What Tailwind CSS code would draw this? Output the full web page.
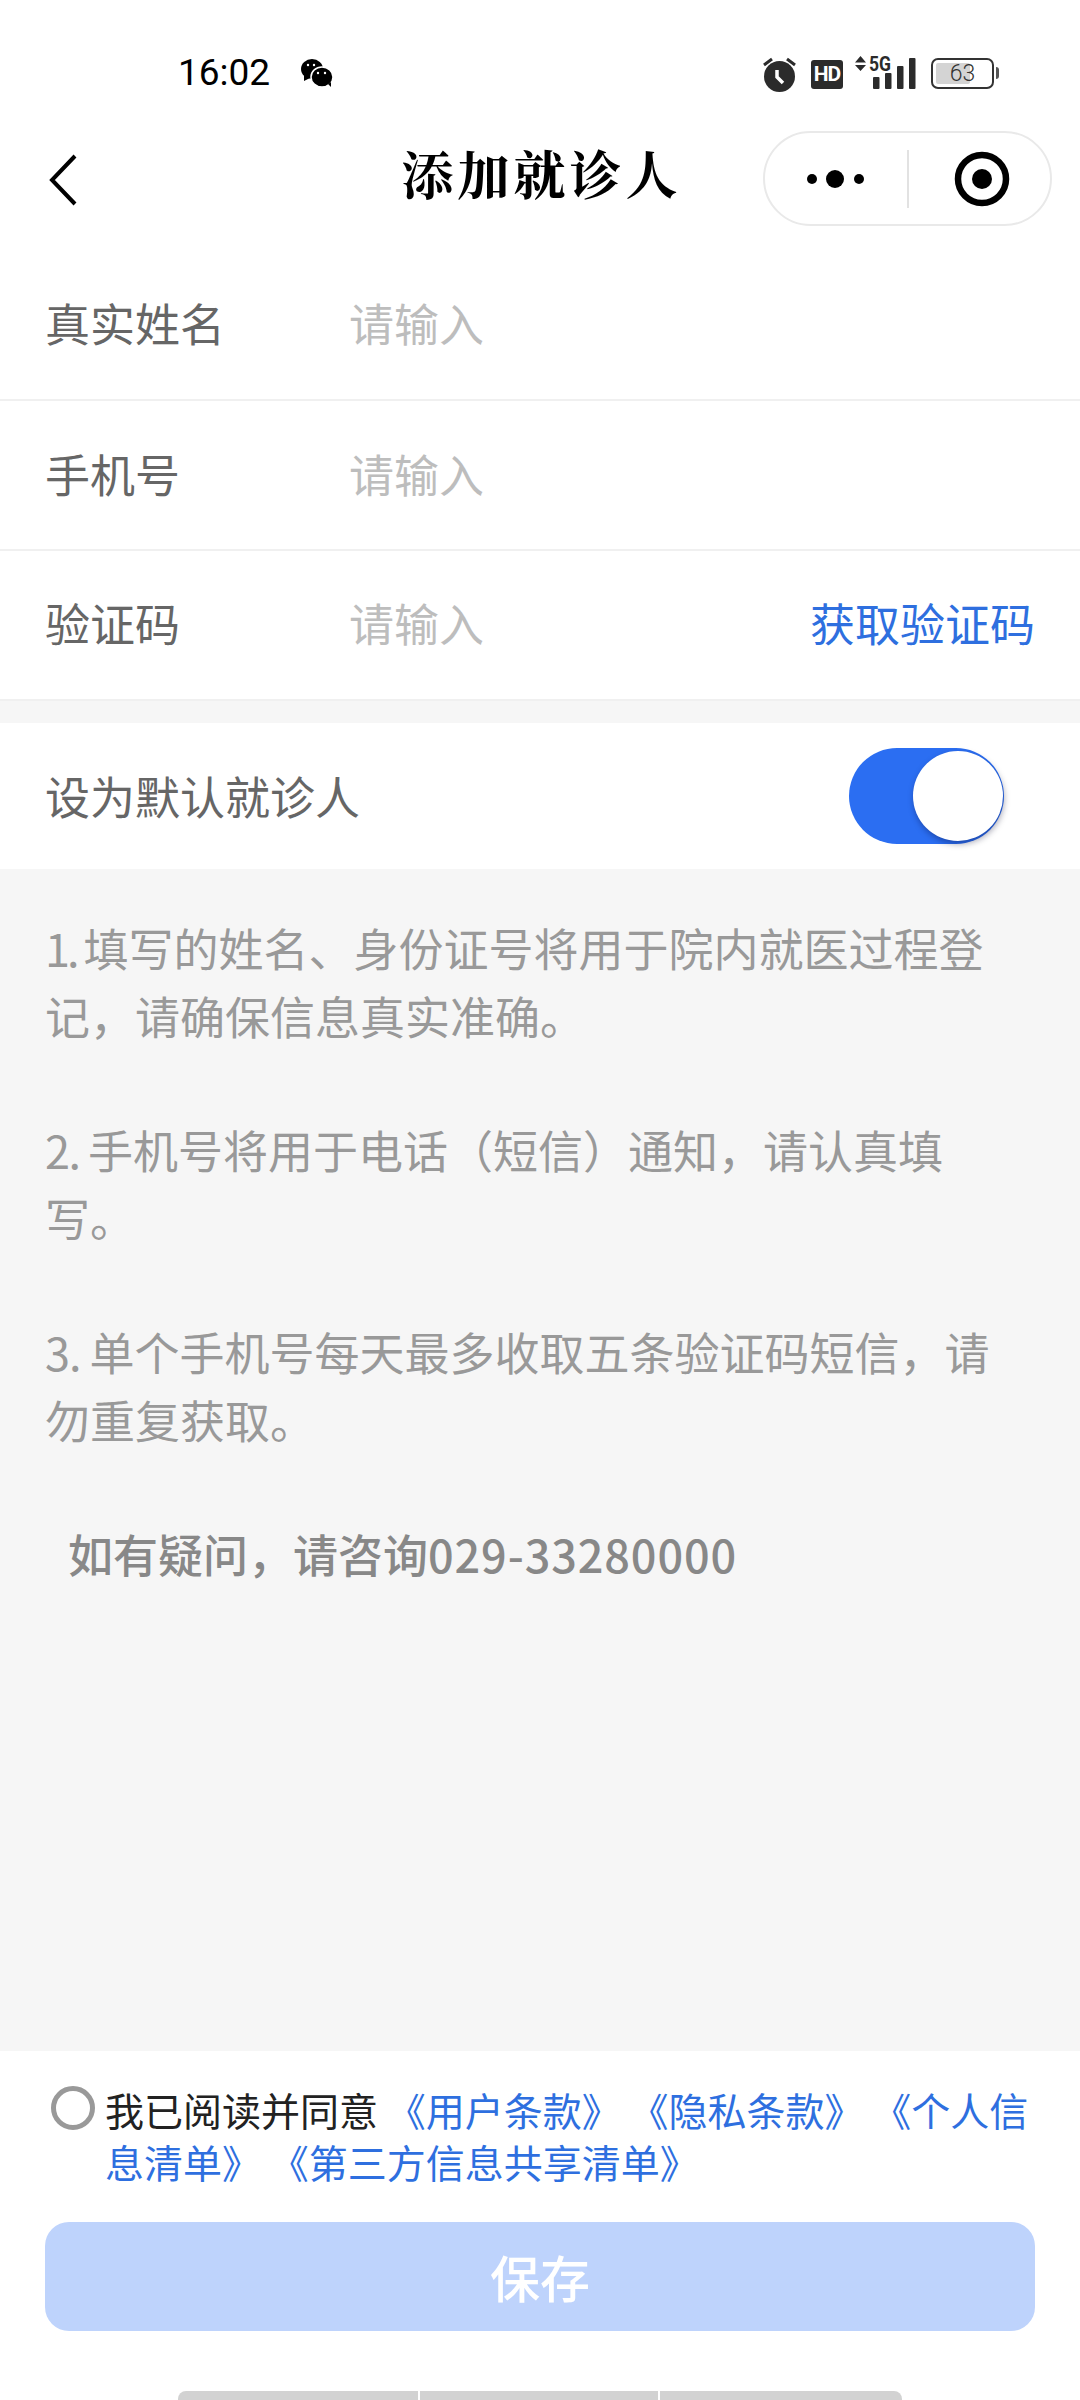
<!DOCTYPE html>
<html lang="zh-CN">
<head>
<meta charset="UTF-8" />
<title>添加就诊人</title>
<script src="https://cdn.jsdelivr.net/npm/@tailwindcss/browser@4"></script>
</head>
<body class="w-[1080px] h-[2400px] bg-[#f6f6f6] font-['Noto_Sans_CJK_SC','Noto_Sans',sans-serif] overflow-hidden flex flex-col">

  <!-- status bar + nav -->
  <div class="bg-white h-[254px] shrink-0 flex flex-col">
    <div class="h-[122px] pt-[47px] pl-[178px] pr-[81px] flex items-start">
      <span class="mt-[6px] font-['Roboto'] text-[37px] leading-[40px] text-black">16:02</span>
      <svg class="ml-[30px] mt-[11px]" width="34" height="30" viewBox="0 0 34 30"><ellipse cx="12" cy="11" rx="11" ry="10" fill="#000"/><path d="M4 17l0 6 6-3z" fill="#000"/><ellipse cx="22" cy="19" rx="11" ry="10" fill="#000" stroke="#fff" stroke-width="1.5"/><path d="M28 26l3 3 0-5z" fill="#000"/><circle cx="8" cy="7" r="1.2" fill="#fff"/><circle cx="14" cy="7" r="1.2" fill="#fff"/><circle cx="18" cy="15" r="1.2" fill="#fff"/><circle cx="25" cy="15" r="1.2" fill="#fff"/></svg>
      <div class="ml-auto flex items-start">
        <svg class="mt-[10px]" width="33" height="35" viewBox="0 0 33 35"><circle cx="16.5" cy="19.5" r="15.5" fill="#2b2b2b"/><path d="M1 8l8-6M32 8l-8-6" stroke="#2b2b2b" stroke-width="3"/><path d="M14 13v7l6 6" stroke="#fff" stroke-width="3.5" fill="none"/></svg>
        <div class="ml-[15px] mt-[13px] w-[32px] h-[29px] rounded-[3px] bg-[#2b2b2b] text-white font-['Roboto'] font-bold text-[21px] leading-[29px] text-center tracking-[-1px]">HD</div>
        <svg class="ml-[12px] mt-[9px]" width="61" height="33" viewBox="0 0 61 33"><path d="M0 6.5l5.5-6.5 5.5 6.5zM0 9h11l-5.5 6z" fill="#2b2b2b"/><rect x="18" y="21" width="6.5" height="12" rx="1" fill="#2b2b2b"/><rect x="30" y="17" width="6.5" height="16" rx="1" fill="#2b2b2b"/><rect x="42" y="10" width="6.5" height="23" rx="1" fill="#2b2b2b"/><rect x="54" y="2" width="6.5" height="31" rx="1" fill="#2b2b2b"/><text x="14" y="15" font-family="Roboto" font-weight="700" font-size="20" textLength="22" lengthAdjust="spacingAndGlyphs" fill="#2b2b2b">5G</text></svg>
        <div class="ml-[15px] mt-[11px] relative w-[63px] h-[31px] rounded-[7px] border-2 border-[#333] bg-white">
          <div class="absolute left-[3px] top-[3px] bottom-[3px] w-[34px] rounded-[2px] bg-[#d4d4d4]"></div>
          <div class="absolute left-0 right-0 top-0 text-center font-['Roboto'] font-light text-[23px] leading-[27px] text-[#333]">63</div>
        </div>
        <div class="ml-[2px] mt-[20px] w-[3px] h-[12px] bg-[#555] rounded-r"></div>
      </div>
    </div>
    <div class="relative h-[132px] flex items-start">
      <svg class="ml-[49px] mt-[32px]" width="28" height="52" viewBox="0 0 28 52"><path d="M26 2L3 26l23 24" fill="none" stroke="#000" stroke-width="4"/></svg>
      <div class="absolute left-0 w-full pl-[3px] text-center top-[26px] font-['Liberation_Serif','Noto_Serif_CJK_SC','Noto_Sans_CJK_SC',serif] font-bold text-[52px] leading-[60px] tracking-[4px] text-black">添加就诊人</div>
      <div class="ml-auto mr-[28px] mt-[9px] w-[289px] h-[95px] rounded-full border-2 border-[#e9e9e9] flex items-center">
        <svg class="ml-[42px]" width="57" height="20" viewBox="0 0 57 20"><circle cx="5" cy="10" r="5" fill="#000"/><circle cx="28" cy="10" r="9" fill="#000"/><circle cx="52" cy="10" r="5" fill="#000"/></svg>
        <div class="ml-[43px] w-[2px] h-[58px] bg-[#e2e2e2]"></div>
        <svg class="ml-[45px]" width="56" height="56" viewBox="0 0 56 56"><circle cx="28" cy="28" r="24" fill="none" stroke="#000" stroke-width="6.5"/><circle cx="28" cy="28" r="10" fill="#000"/></svg>
      </div>
    </div>
  </div>

  <!-- form -->
  <div class="bg-white shrink-0">
    <div class="h-[147px] flex items-center px-[45px] border-b-2 border-[#f0f0f0] text-[45px] pb-[8px]">
      <span class="w-[304px] text-[#666]">真实姓名</span><span class="text-[#bdbdbd]">请输入</span>
    </div>
    <div class="h-[150px] flex items-center px-[45px] border-b-2 border-[#f0f0f0] text-[45px] pb-[3px]">
      <span class="w-[304px] text-[#666]">手机号</span><span class="text-[#bdbdbd]">请输入</span>
    </div>
    <div class="h-[150px] flex items-center px-[45px] border-b-2 border-[#f0f0f0] text-[45px] pb-[5px]">
      <span class="w-[304px] text-[#666]">验证码</span><span class="text-[#bdbdbd]">请输入</span>
      <span class="ml-auto text-[#2e6fdf]">获取验证码</span>
    </div>
  </div>

  <!-- default toggle -->
  <div class="mt-[22px] h-[146px] bg-white shrink-0 flex items-center pl-[45px] pr-[76px]">
    <span class="text-[45px] text-[#666]">设为默认就诊人</span>
    <div class="ml-auto w-[155px] h-[96px] rounded-full bg-[#2b6ef2] relative">
      <div class="absolute right-[1px] top-[3px] w-[90px] h-[90px] rounded-full bg-white shadow-[1px_3px_6px_rgba(0,0,40,0.35)]"></div>
    </div>
  </div>

  <!-- notes -->
  <div class="flex-1 pt-[45px] pl-[45px] pr-[40px] text-[45px] leading-[68px] text-[#999] min-h-0">
    <p><span class="tracking-[-3px]">1. </span>填写的姓名、身份证号将用于院内就医过程登<br>记，请确保信息真实准确。</p>
    <p class="mt-[66px]"><span class="tracking-[-1.5px]">2. </span>手机号将用于电话（短信）通知，请认真填<br>写。</p>
    <p class="mt-[66px]"><span class="tracking-[-1px]">3. </span>单个手机号每天最多收取五条验证码短信，请<br>勿重复获取。</p>
    <p class="mt-[66px] pl-[23px] font-medium text-[#888]">如有疑问，请咨询<span class="tracking-[0.9px]">029-33280000</span></p>
  </div>

  <!-- agreement + save -->
  <div class="bg-white h-[349px] shrink-0 relative">
    <div class="flex pt-[32px] pl-[51px] pr-[40px]">
      <div class="w-[44px] h-[44px] rounded-full border-[5px] border-[#999] shrink-0 mt-[3px]"></div>
      <p class="ml-[10px] text-[39px] leading-[52px] text-[#222]">我已阅读并同意 <span class="text-[#2e6fdf]">《用户条款》 《隐私条款》 《个人信息清单》 《第三方信息共享清单》</span></p>
    </div>
    <div class="mx-[45px] mt-[35px] h-[109px] rounded-[24px] bg-[#bed3fc] flex items-center justify-center text-white text-[50px] font-medium">保存</div>
    <div class="absolute left-[178px] bottom-0 w-[724px] h-[9px] flex gap-[2px]">
      <div class="w-[240px] bg-[#d2d2d2] rounded-tl-[8px]"></div>
      <div class="w-[238px] bg-[#d2d2d2]"></div>
      <div class="flex-1 bg-[#d2d2d2] rounded-tr-[8px]"></div>
    </div>
  </div>
</body>
</html>
